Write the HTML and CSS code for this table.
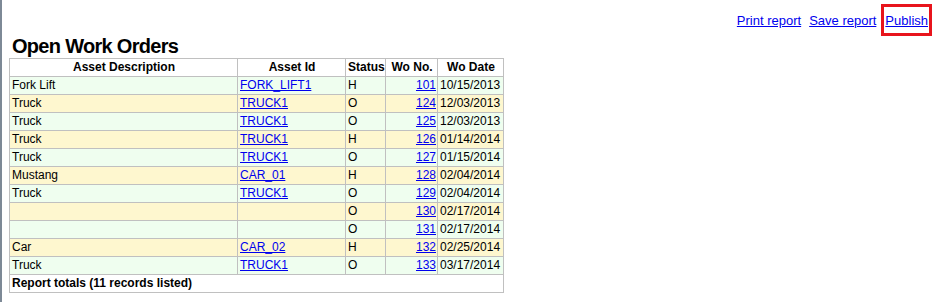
FILE: index.html
```html
<!DOCTYPE html>
<html>
<head>
<meta charset="utf-8">
<title>Open Work Orders</title>
<link rel="stylesheet" href="styles.css">
</head>
<body>
<div class="page">
  <div class="toolbar">
    <a href="#" class="tool">Print report</a>
    <a href="#" class="tool">Save report</a>
    <a href="#" class="tool publish">Publish</a>
  </div>
  <h1 class="title">Open Work Orders</h1>
  <table class="report">
    <colgroup>
      <col class="c-desc"><col class="c-id"><col class="c-status"><col class="c-wo"><col class="c-date">
    </colgroup>
    <thead>
      <tr><th>Asset Description</th><th>Asset Id</th><th>Status</th><th>Wo No.</th><th>Wo Date</th></tr>
    </thead>
    <tbody>
      <tr class="odd"><td>Fork Lift</td><td><a href="#">FORK_LIFT1</a></td><td>H</td><td class="num"><a href="#">101</a></td><td>10/15/2013</td></tr>
      <tr class="even"><td>Truck</td><td><a href="#">TRUCK1</a></td><td>O</td><td class="num"><a href="#">124</a></td><td>12/03/2013</td></tr>
      <tr class="odd"><td>Truck</td><td><a href="#">TRUCK1</a></td><td>O</td><td class="num"><a href="#">125</a></td><td>12/03/2013</td></tr>
      <tr class="even"><td>Truck</td><td><a href="#">TRUCK1</a></td><td>H</td><td class="num"><a href="#">126</a></td><td>01/14/2014</td></tr>
      <tr class="odd"><td>Truck</td><td><a href="#">TRUCK1</a></td><td>O</td><td class="num"><a href="#">127</a></td><td>01/15/2014</td></tr>
      <tr class="even"><td>Mustang</td><td><a href="#">CAR_01</a></td><td>H</td><td class="num"><a href="#">128</a></td><td>02/04/2014</td></tr>
      <tr class="odd"><td>Truck</td><td><a href="#">TRUCK1</a></td><td>O</td><td class="num"><a href="#">129</a></td><td>02/04/2014</td></tr>
      <tr class="even"><td></td><td></td><td>O</td><td class="num"><a href="#">130</a></td><td>02/17/2014</td></tr>
      <tr class="odd"><td></td><td></td><td>O</td><td class="num"><a href="#">131</a></td><td>02/17/2014</td></tr>
      <tr class="even"><td>Car</td><td><a href="#">CAR_02</a></td><td>H</td><td class="num"><a href="#">132</a></td><td>02/25/2014</td></tr>
      <tr class="odd"><td>Truck</td><td><a href="#">TRUCK1</a></td><td>O</td><td class="num"><a href="#">133</a></td><td>03/17/2014</td></tr>
    </tbody>
    <tfoot>
      <tr><td colspan="5" class="totals">Report totals (11 records listed)</td></tr>
    </tfoot>
  </table>
</div>
</body>
</html>
```

FILE: styles.css
```css
html, body {
  margin: 0;
  padding: 0;
  background: #ffffff;
}

body {
  font-family: "Liberation Sans", Arial, sans-serif;
  color: #000000;
}

.page {
  border-left: 2px solid #7d8996;
  min-height: 302px;
  box-sizing: border-box;
  padding-left: 7px;
  padding-right: 1px;
}

.toolbar {
  display: flex;
  justify-content: flex-end;
  align-items: center;
  gap: 8px;
  padding-top: 4px;
  height: 32px;
}

.tool {
  font-size: 13px;
  line-height: 15px;
  color: #0000ee;
  text-decoration: underline;
}

.publish {
  margin-left: -3px;
  border: 3px solid #e8141c;
  padding: 6px 1px 5px 1px;
}

.title {
  margin: 0;
  padding-left: 3px;
  font-size: 20px;
  letter-spacing: -0.7px;
  line-height: 21px;
  height: 22px;
  font-weight: bold;
}

.report {
  border-collapse: collapse;
  border: 1px solid #c0c0c0;
  font-size: 12px;
  table-layout: fixed;
  width: 494px;
}

.c-desc { width: 228px; }
.c-id { width: 108px; }
.c-status { width: 40px; }
.c-wo { width: 52px; }
.c-date { width: 66px; }

.report th,
.report td {
  border: 1px solid #c0c0c0;
  padding: 1px 1px 1px 2px;
  height: 15px;
  line-height: 15px;
  white-space: nowrap;
  overflow: hidden;
  box-sizing: content-box;
}

.report th {
  font-weight: bold;
  text-align: center;
  background: #ffffff;
}

.report td a {
  color: #0000ee;
  text-decoration: underline;
}

.report td.num {
  text-align: right;
  padding-right: 1px;
}

.odd td {
  background: #effeef;
}

.even td {
  background: #fef7cf;
}

.report td.totals {
  font-weight: bold;
  background: #ffffff;
}
```
